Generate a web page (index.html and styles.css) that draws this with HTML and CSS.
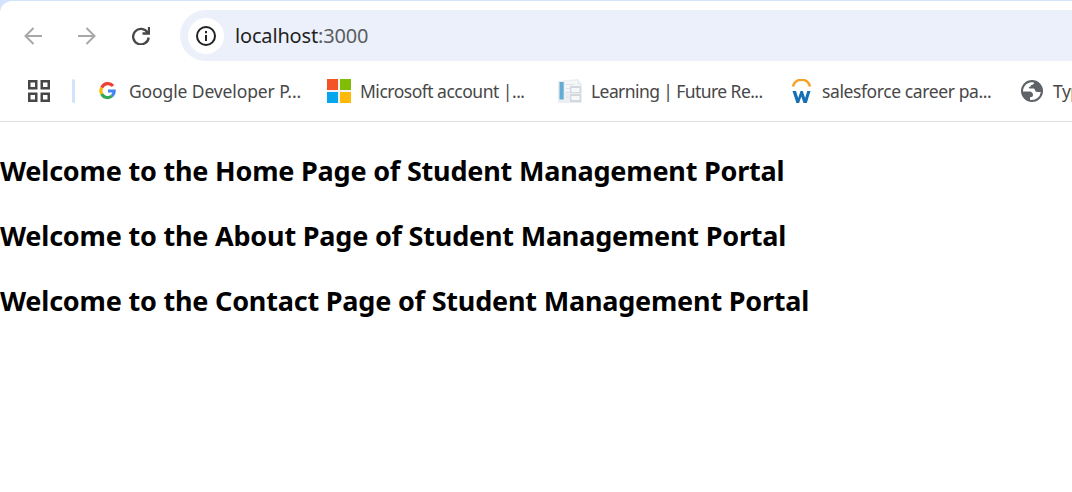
FILE: index.html
```html
<!DOCTYPE html>
<html lang="en">
<head>
<meta charset="utf-8">
<title>Student Management Portal</title>
<link rel="stylesheet" href="styles.css">
</head>
<body>
<header class="chrome">
  <nav class="toolbar">
    <svg class="nav-icon back" viewBox="0 0 18 18"><path d="M18 9H2M9.500 1 1.500 9l8 8"/></svg>
    <svg class="nav-icon forward" viewBox="0 0 18 18"><path d="M0 9h16M8.500 1l8 8-8 8"/></svg>
    <svg class="nav-icon reload" viewBox="0 0 18 18"><path d="M15.600 5.500A7.800 7.800 0 1 0 16.700 10.500M17 0v6.500h-6.500"/></svg>
    <div class="address">
      <span class="info"><svg viewBox="0 0 20 20"><circle cx="10" cy="10" r="9"/><path d="M10 9v6M10 5v2.300"/></svg></span>
      <span class="url">localhost<span class="port">:3000</span></span>
    </div>
  </nav>
  <nav class="bookmarks">
    <svg class="apps" viewBox="0 0 22 22"><path d="M1.250 1.250h7v7h-7zM13.750 1.250h7v7h-7zM1.250 13.750h7v7h-7zM13.750 13.750h7v7h-7z"/></svg>
    <span class="divider"></span>
    <a class="bookmark google">
      <svg class="favicon" viewBox="0 0 24 24"><g fill="none" stroke-width="3.200"><path stroke="#ea4335" d="M5.700 8.800A6.600 6.600 0 0 1 17 7"/><path stroke="#fbbc05" d="M5.700 8.700a6.600 6.600 0 0 0 0 6.300"/><path stroke="#34a853" d="M5.700 15A6.600 6.600 0 0 0 16 16.900"/><path stroke="#4285f4" d="M12 12h6.200q.1 3-2.200 4.900"/></g></svg>
      <span class="label">Google Developer P...</span>
    </a>
    <a class="bookmark microsoft">
      <svg class="favicon" viewBox="0 0 24 24"><path fill="#f3f3f3" d="M0 0h24v24H0z"/><path fill="#f35325" d="M0 0h11v11H0z"/><path fill="#81bc06" d="M13 0h11v11H13z"/><path fill="#05a6f0" d="M0 13h11v11H0z"/><path fill="#ffba08" d="M13 13h11v11H13z"/></svg>
      <span class="label">Microsoft account |...</span>
    </a>
    <a class="bookmark learning">
      <svg class="favicon" viewBox="0 0 24 24"><path fill="#eceef1" d="M0 2 20 0l4 5v19H0z"/><path fill="#f6f7f9" d="M7 2h12v4h4v6H7z"/><path fill="#62acd6" d="M1.500 3h4.200v17.500H1.500z"/><path fill="#e0e4e9" d="M8 5h9v1H8zm0 4h4v1H8zm0 4h4v1H8zm0 5h3v1H8z"/><path fill="#d3d8de" d="M12 7h11v7H12zm0 8h11v8H12z"/><path fill="#f7f8fa" d="M13.500 9h8v4h-8zm0 8h8v4h-8z"/></svg>
      <span class="label">Learning | Future Re...</span>
    </a>
    <a class="bookmark salesforce">
      <svg class="favicon" viewBox="0 0 24 24"><path fill="none" stroke="#f6a127" stroke-width="2.500" d="M4 7.500a8.700 8.700 0 0 1 17 0"/><path fill="#1770b3" d="M3.500 12H7l2.200 7 2.300-7h2.300l2.300 7 2.200-7h3.200l-3.700 12h-3.300l-2.200-6.500-2.200 6.500H7.400z"/></svg>
      <span class="label">salesforce career pa...</span>
    </a>
    <a class="bookmark typing">
      <svg class="favicon" viewBox="0 0 24 24"><circle cx="12" cy="12" r="11" fill="#5f6368"/><path fill="#fff" d="M14 3.500c0 2-1 2-2.800 2.500-.7.200 0 2-1.700 2-1 0-1 1.500.2 1.500h4c1.300 0 1.300 3.500 3.300 3.500h3.800A9 9 0 0 1 10 20.800v-2.500c2 0 3-1 3-2.300 0-3-2.500-3.500-4-3.500H3A9 9 0 0 1 14 3.500z"/></svg>
      <span class="label">Typ</span>
    </a>
  </nav>
</header>
<main class="page">
  <h2 class="heading">Welcome to the Home Page of Student Management Portal</h2>
  <h2 class="heading about">Welcome to the About Page of Student Management Portal</h2>
  <h2 class="heading contact">Welcome to the Contact Page of Student Management Portal</h2>
</main>
</body>
</html>
```
FILE: styles.css
```css
* { box-sizing: border-box; }
body {
  margin: 0;
  overflow: hidden;
  background: #fff;
  color: #000;
  font-family: "Noto Sans", "Open Sans", sans-serif;
}
svg { display: block; flex: none; }
.chrome {
  height: 122px;
  padding-top: 1px;
  background: #d3e3fd;
  border-bottom: 1px solid #dedfe1;
}
.toolbar {
  display: flex;
  align-items: center;
  height: 60px;
  padding: 9px 0 0 24px;
  background: #fff;
  border-top-left-radius: 12px;
}
.nav-icon {
  width: 18px;
  height: 18px;
  fill: none;
  stroke: #a8a8a8;
  stroke-width: 2;
}
.forward { margin-left: 36px; }
.reload { margin-left: 36px; stroke: #474747; stroke-width: 2.3; }
.address {
  display: flex;
  align-items: center;
  flex: 1;
  height: 51px;
  margin-left: 30px;
  padding-left: 8px;
  background: #ecf0fa;
  border-radius: 26px 0 0 26px;
}
.info {
  display: grid;
  place-items: center;
  width: 36px;
  height: 36px;
  border-radius: 50%;
  background: #fff;
}
.info svg { width: 20px; height: 20px; fill: none; stroke: #202124; stroke-width: 2; }
.url {
  margin-left: 11px;
  color: #1f1f1f;
  font-size: 20px;
  line-height: 28px;
  letter-spacing: -.17px;
}
.port { color: #5a5d60; }
.bookmarks {
  display: flex;
  align-items: center;
  height: 60px;
  padding-left: 28px;
  overflow: hidden;
  background: #fff;
}
.apps { width: 22px; height: 22px; fill: none; stroke: #474747; stroke-width: 2.5; }
.divider { flex: none; width: 3px; height: 24px; margin: 0 21px 0 22px; border-radius: 2px; background: #d3e3fd; }
.bookmark { display: flex; flex: none; align-items: center; gap: 9px; width: 231px; }
.favicon { width: 24px; height: 24px; }
.label {
  padding-bottom: 1px;
  color: #474747;
  font-size: 17.5px;
  line-height: 26px;
  white-space: nowrap;
}
.google .label { letter-spacing: -.12px; }
.microsoft .label { letter-spacing: -.5px; }
.learning .label { letter-spacing: -.58px; }
.salesforce .label { letter-spacing: -.4px; }
.typing .label { letter-spacing: -.5px; }
.page { padding-top: 30px; }
.heading {
  margin: 0 0 27px;
  font-size: 27px;
  line-height: 38px;
  letter-spacing: -.2px;
  white-space: nowrap;
}
```
